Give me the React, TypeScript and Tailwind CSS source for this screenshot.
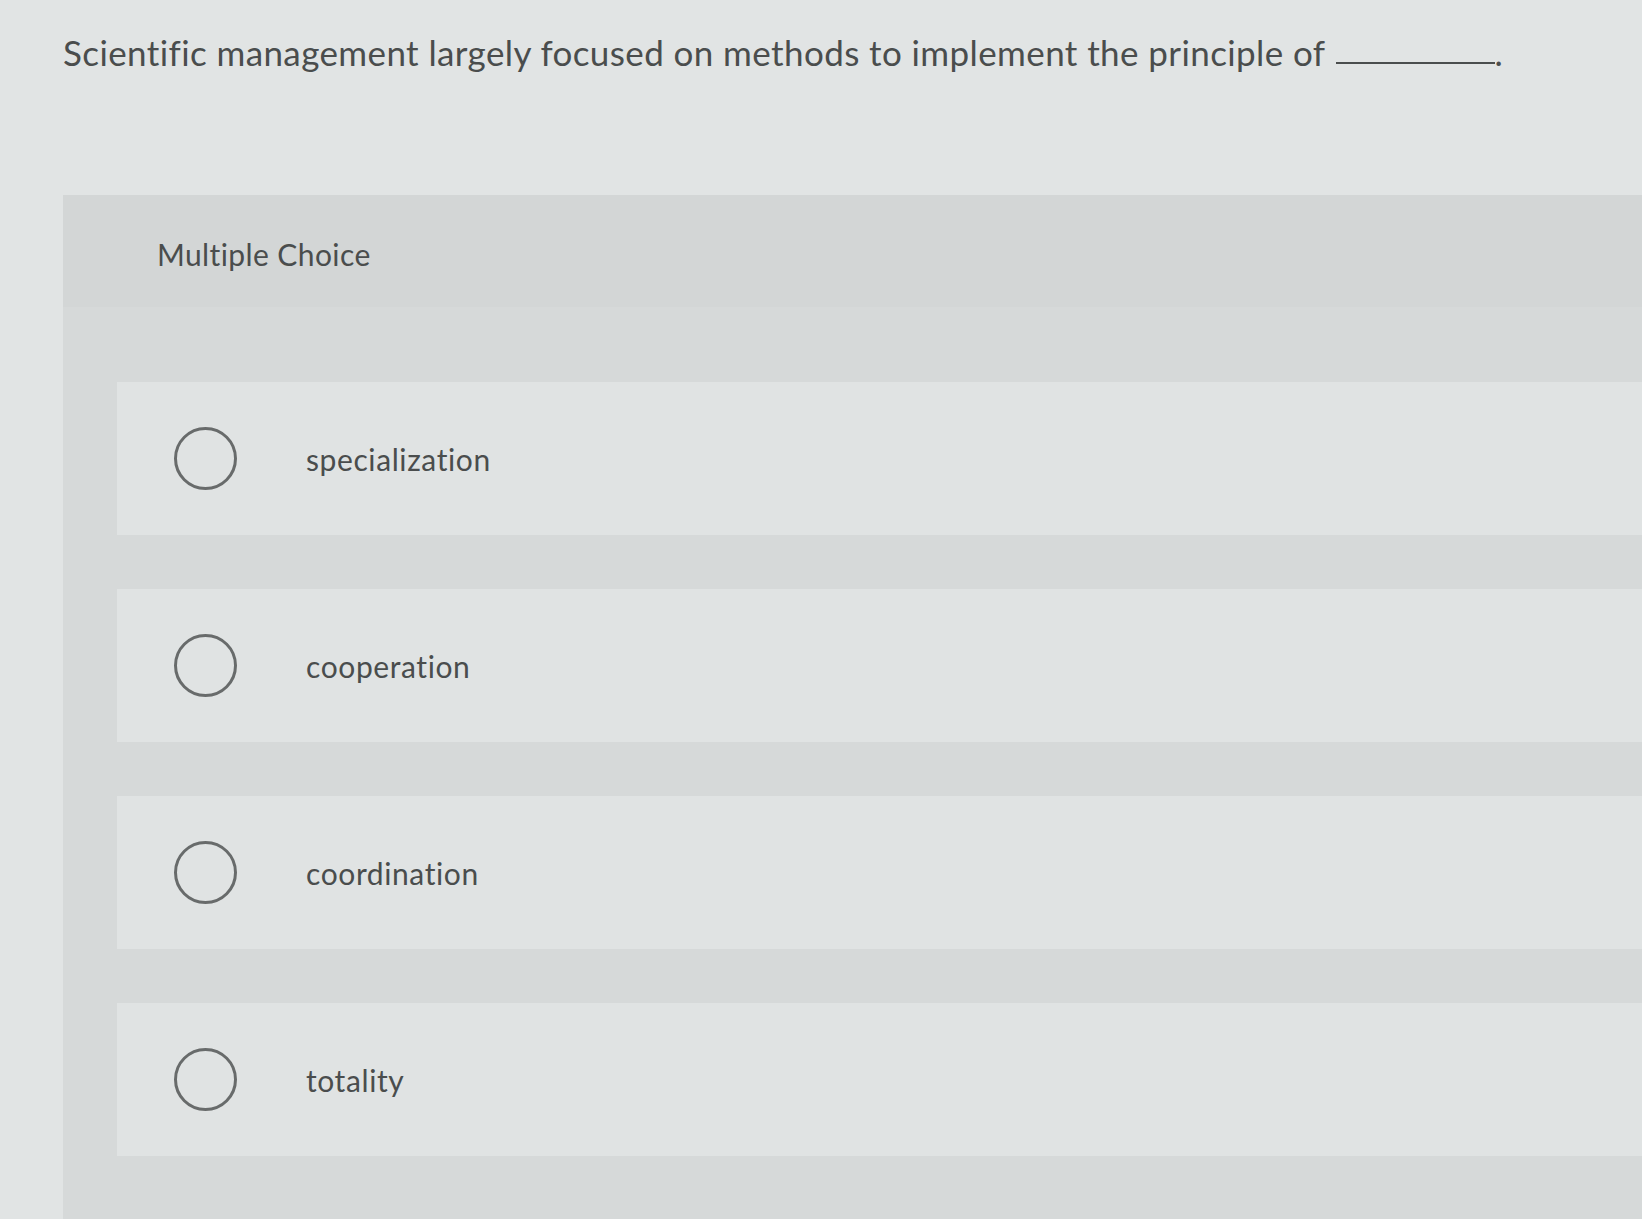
const options = ["specialization", "cooperation", "coordination", "totality"];

export default function App() {
  return (
    <div
      className="w-[1642px] h-[1219px] overflow-hidden bg-[#e1e4e4] text-[#4a4d4d]"
      style={{ fontFamily: "Lato, 'Open Sans', sans-serif" }}
    >
      {/* Question */}
      <div className="pl-[63px] pt-[31px] flex items-end text-[35px] leading-[42px] tracking-[0.4px]">
        <span>Scientific management largely focused on methods to implement the principle of</span>
        <span className="ml-[10px] mb-[9px] w-[159px] border-b-2 border-[#4a4d4d]" />
        <span>.</span>
      </div>

      {/* Panel */}
      <div className="mt-[122px] ml-[63px] w-[1620px] h-[1100px] bg-[#d6d9d9]">
        <div className="h-[112px] pt-[41px] pl-[94px] bg-[#d3d6d6] text-[30px] leading-[36px] tracking-[0.4px]">
          Multiple Choice
        </div>
        <div className="pt-[75px] pl-[54px] flex flex-col gap-[54px]">
          {options.map((o) => (
            <div key={o} className="h-[153px] bg-[#e0e3e3] flex items-center pl-[57px]">
              <span className="w-[63px] h-[63px] rounded-full border-[3px] border-[#686b6b] shrink-0" />
              <span className="ml-[69px] text-[30px] leading-[36px] tracking-[0.6px]">{o}</span>
            </div>
          ))}
        </div>
      </div>
    </div>
  );
}
